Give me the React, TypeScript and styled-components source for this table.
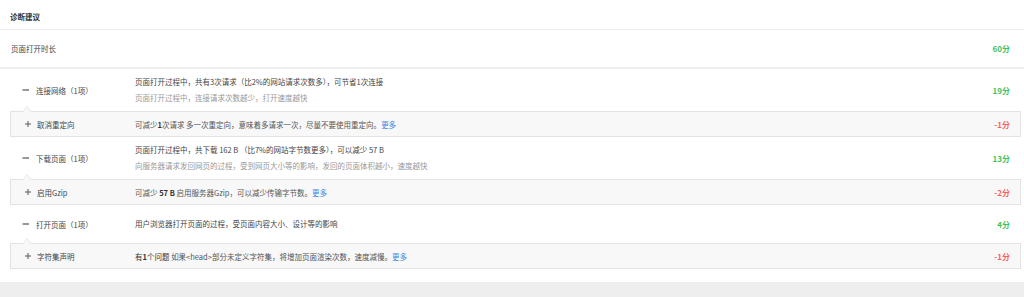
import React from "react";
import styled, { createGlobalStyle } from "styled-components";

const GlobalStyle = createGlobalStyle`
  body {
    margin: 0;
    background: #fff;
    font-family: "Noto Sans CJK SC", "Liberation Sans", sans-serif;
    color: #444;
  }
`;

const More = styled.a`
  color: #3a86e0;
  cursor: pointer;
`;

const Dark = styled.span`
  color: #333;
`;

type SubItem = { title: string; desc: React.ReactNode; score: number };
type Group = { title: string; lines: string[]; score: number; sub: SubItem };

const groups: Group[] = [
  {
    title: "连接网络（1项）",
    lines: ["页面打开过程中，共有3次请求（比2%的网站请求次数多），可节省1次连接", "页面打开过程中，连接请求次数越少，打开速度越快"],
    score: 19,
    sub: {
      title: "取消重定向",
      desc: (
        <>
          可减少<b>1</b>次请求 多一次重定向，意味着多请求一次，尽量不要使用重定向。<More>更多</More>
        </>
      ),
      score: -1,
    },
  },
  {
    title: "下载页面（1项）",
    lines: ["页面打开过程中，共下载 162 B （比7%的网站字节数更多），可以减少 57 B", "向服务器请求发回网页的过程，受到网页大小等的影响，发回的页面体积越小，速度越快"],
    score: 13,
    sub: {
      title: "启用Gzip",
      desc: (
        <>
          可减少 <b>57 B</b> 启用服务器Gzip，可以减少传输字节数。<More>更多</More>
        </>
      ),
      score: -2,
    },
  },
  {
    title: "打开页面（1项）",
    lines: ["用户浏览器打开页面的过程，受页面内容大小、设计等的影响"],
    score: 4,
    sub: {
      title: "字符集声明",
      desc: (
        <>
          <Dark>
            有<b>1</b>个问题
          </Dark>{" "}
          如果&lt;head&gt;部分未定义字符集，将增加页面渲染次数，速度减慢。<More>更多</More>
        </>
      ),
      score: -1,
    },
  },
];

const MinusIcon = () => (
  <StIcon width="8" height="8" viewBox="0 0 8 8">
    <line x1="0.5" y1="4" x2="7" y2="4" stroke="#555" strokeWidth="1.2" />
  </StIcon>
);

const PlusIcon = () => (
  <StIcon width="8" height="8" viewBox="0 0 8 8">
    <line x1="1" y1="4" x2="7" y2="4" stroke="#666" strokeWidth="1.1" />
    <line x1="4" y1="1" x2="4" y2="7" stroke="#666" strokeWidth="1.1" />
  </StIcon>
);

const App = () => {
  return (
    <>
      <GlobalStyle />
      <StPage>
        <StHeader>诊断建议</StHeader>
        <StTotalRow>
          <span>页面打开时长</span>
          <StScore $bad={false}>60分</StScore>
        </StTotalRow>
        {groups.map(group => (
          <div key={group.title}>
            <StGroupRow>
              <StTitleCell>
                <MinusIcon />
                <span>{group.title}</span>
              </StTitleCell>
              <StDescCell>
                {group.lines.map((line, i) => (
                  <StLine key={line} $sub={i > 0}>
                    {line}
                  </StLine>
                ))}
              </StDescCell>
              <StScore $bad={false}>{group.score}分</StScore>
            </StGroupRow>
            <StSubBox>
              <StSubTitleCell>
                <PlusIcon />
                <span>{group.sub.title}</span>
              </StSubTitleCell>
              <StSubDesc>{group.sub.desc}</StSubDesc>
              <StScore $bad={true}>{group.sub.score}分</StScore>
            </StSubBox>
          </div>
        ))}
        <StFooter />
      </StPage>
    </>
  );
};

export default App;

const StPage = styled.div`
  width: 1024px;
  height: 297px;
  display: flex;
  flex-direction: column;
  font-size: 7.5px;
  overflow: hidden;
`;

const StHeader = styled.div`
  height: 30px;
  flex-shrink: 0;
  box-sizing: border-box;
  padding: 4px 0 0 10px;
  display: flex;
  align-items: center;
  font-weight: bold;
  color: #333;
  border-bottom: 1px solid #ececec;
`;

const StTotalRow = styled.div`
  height: 39px;
  flex-shrink: 0;
  box-sizing: border-box;
  display: flex;
  align-items: center;
  justify-content: space-between;
  padding: 0 14px 0 11px;
  color: #444;
  border-bottom: 2px solid #eeeeee;
`;

const StGroupRow = styled.div`
  min-height: 38px;
  box-sizing: border-box;
  padding: 5px 14px 5px 0;
  display: flex;
  align-items: center;
`;

const StTitleCell = styled.div`
  width: 135px;
  flex-shrink: 0;
  box-sizing: border-box;
  padding-left: 22px;
  display: flex;
  align-items: center;
  gap: 6px;
  color: #444;
`;

const StDescCell = styled.div`
  flex: 1;
  display: flex;
  flex-direction: column;
`;

const StLine = styled.div<{ $sub: boolean }>`
  line-height: 16px;
  color: ${p => (p.$sub ? "#999" : "#444")};
`;

const StScore = styled.span<{ $bad: boolean }>`
  font-size: 8px;
  font-weight: bold;
  color: ${p => (p.$bad ? "#f76260" : "#45c15c")};
`;

const StSubBox = styled.div`
  position: relative;
  height: 26px;
  box-sizing: border-box;
  margin: 0 3px 0 10px;
  padding-right: 10px;
  display: flex;
  align-items: center;
  background: #f8f8f8;
  border: 1px solid #e3e3e3;

  &::before,
  &::after {
    content: "";
    position: absolute;
    left: 12px;
    width: 0;
    height: 0;
    border-left: 4px solid transparent;
    border-right: 4px solid transparent;
  }
  &::before {
    top: -6px;
    border-bottom: 5px solid #e3e3e3;
  }
  &::after {
    top: -5px;
    border-bottom: 5px solid #f8f8f8;
  }
`;

const StSubTitleCell = styled(StTitleCell)`
  width: 124px;
  padding-left: 13px;
  gap: 5px;
`;

const StSubDesc = styled.div`
  flex: 1;
  color: #555;

  b {
    color: #333;
  }
`;

const StIcon = styled.svg`
  display: block;
  flex-shrink: 0;
`;

const StFooter = styled.div`
  margin-top: 13px;
  flex: 1;
  background: #eeeeee;
`;
